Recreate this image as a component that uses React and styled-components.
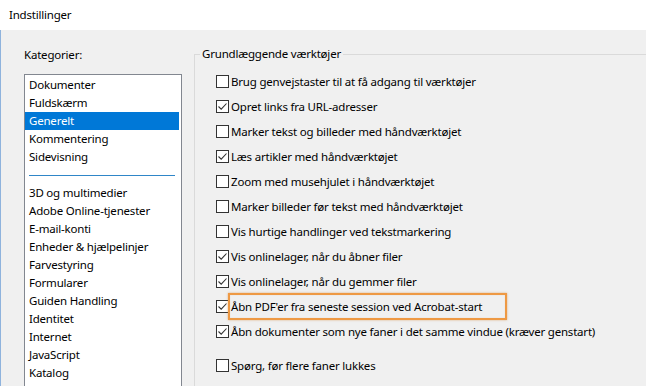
import React from 'react';
import styled, { createGlobalStyle } from 'styled-components';

const GlobalStyle = createGlobalStyle`
    html, body {
        margin: 0;
        padding: 0;
        width: 646px;
        height: 386px;
        overflow: hidden;
        background: #f0f0f0;
    }
    body {
        font-family: "Noto Sans", "Open Sans", sans-serif;
        font-size: 11.5px;
        letter-spacing: -0.2px;
        color: #000;
    }
`;

const categories = [
    'Dokumenter',
    'Fuldskærm',
    'Generelt',
    'Kommentering',
    'Sidevisning',
    '---',
    '3D og multimedier',
    'Adobe Online-tjenester',
    'E-mail-konti',
    'Enheder & hjælpelinjer',
    'Farvestyring',
    'Formularer',
    'Guiden Handling',
    'Identitet',
    'Internet',
    'JavaScript',
    'Katalog',
];

const options = [
    { label: 'Brug genvejstaster til at få adgang til værktøjer', checked: false },
    { label: 'Opret links fra URL-adresser', checked: true },
    { label: 'Marker tekst og billeder med håndværktøjet', checked: false },
    { label: 'Læs artikler med håndværktøjet', checked: true },
    { label: 'Zoom med musehjulet i håndværktøjet', checked: false },
    { label: 'Marker billeder før tekst med håndværktøjet', checked: false },
    { label: 'Vis hurtige handlinger ved tekstmarkering', checked: false },
    { label: 'Vis onlinelager, når du åbner filer', checked: true },
    { label: 'Vis onlinelager, når du gemmer filer', checked: true },
    { label: "Åbn PDF'er fra seneste session ved Acrobat-start", checked: true, highlight: true },
    { label: 'Åbn dokumenter som nye faner i det samme vindue (kræver genstart)', checked: true },
    { label: 'Spørg, før flere faner lukkes', checked: false, spaced: true },
];

const App = () => {
    return (
        <>
            <GlobalStyle />
            <Window>
                <TitleBar>Indstillinger</TitleBar>
                <Body>
                    <Sidebar>
                        <SideLabel>Kategorier:</SideLabel>
                        <CategoryList>
                            {categories.map((name, i) =>
                                name === '---' ? (
                                    <Separator key={i} />
                                ) : (
                                    <CategoryItem key={i} $selected={name === 'Generelt'}>
                                        {name}
                                    </CategoryItem>
                                )
                            )}
                        </CategoryList>
                    </Sidebar>
                    <Content>
                        <Group>
                            <Legend>Grundlæggende værktøjer</Legend>
                            {options.map((opt) => (
                                <OptionRow key={opt.label} $highlight={opt.highlight} $spaced={opt.spaced}>
                                    <CheckBox>
                                        {opt.checked && (
                                            <svg width="11" height="11" viewBox="0 0 11 11">
                                                <path d="M1.5 5.5 L4.2 8.2 L9.5 2.5" fill="none" stroke="#333" strokeWidth="1.1" />
                                            </svg>
                                        )}
                                    </CheckBox>
                                    <OptionText>{opt.label}</OptionText>
                                </OptionRow>
                            ))}
                        </Group>
                    </Content>
                </Body>
            </Window>
        </>
    );
};

const Window = styled.div`
    width: 646px;
    height: 386px;
    display: flex;
    flex-direction: column;
    overflow: hidden;
`;

const TitleBar = styled.div`
    height: 30px;
    line-height: 30px;
    padding-left: 9px;
    background: #fff;
    flex-shrink: 0;
`;

const Body = styled.div`
    flex: 1;
    display: flex;
    overflow: hidden;
    background: #f0f0f0;
    border-left: 1px solid #8fb3dd;
`;

const Sidebar = styled.div`
    width: 158px;
    padding: 17px 0 0 23px;
    flex-shrink: 0;
`;

const SideLabel = styled.div`
    line-height: 16px;
    margin-bottom: 11px;
`;

const CategoryList = styled.div`
    box-sizing: border-box;
    width: 158px;
    height: 400px;
    background: #fff;
    border: 1px solid #828790;
    padding: 1px 2px 0 0;
`;

const CategoryItem = styled.div`
    height: 18px;
    line-height: 18px;
    padding-left: 4px;
    white-space: nowrap;
    background: ${(p) => (p.$selected ? '#0078d7' : 'transparent')};
    color: ${(p) => (p.$selected ? '#fff' : '#000')};
`;

const Separator = styled.div`
    height: 18px;
    display: flex;
    align-items: center;
    padding: 0 4px;

    &::before {
        content: '';
        flex: 1;
        height: 1px;
        background: #2f86c8;
    }
`;

const Content = styled.div`
    flex: 1;
    padding: 16px 0 0 12px;
    overflow: hidden;
`;

const Group = styled.fieldset`
    margin: 0;
    padding: 7px 0 40px 0;
    border: 1px solid #dadada;
    border-right: none;
    min-width: 0;
`;

const Legend = styled.legend`
    margin-left: 5px;
    padding: 0 2px;
    line-height: 16px;
`;

const OptionRow = styled.div`
    position: relative;
    height: 25px;
    display: flex;
    align-items: center;
    padding-left: 21px;
    margin-top: ${(p) => (p.$spaced ? '9px' : '0')};

    &::after {
        content: '';
        display: ${(p) => (p.$highlight ? 'block' : 'none')};
        position: absolute;
        left: 33px;
        top: -1px;
        width: 279px;
        height: 27px;
        box-sizing: border-box;
        border: 2px solid #ee9944;
        box-shadow: 0 0 2px rgba(210, 130, 50, 0.6), inset 0 0 1px rgba(210, 130, 50, 0.4);
        pointer-events: none;
    }
`;

const CheckBox = styled.span`
    box-sizing: border-box;
    width: 13px;
    height: 13px;
    border: 1px solid #333;
    background: #fff;
    display: flex;
    align-items: center;
    justify-content: center;
    flex-shrink: 0;
`;

const OptionText = styled.span`
    margin-left: 2px;
    white-space: nowrap;
    line-height: 16px;
`;

export default App;
